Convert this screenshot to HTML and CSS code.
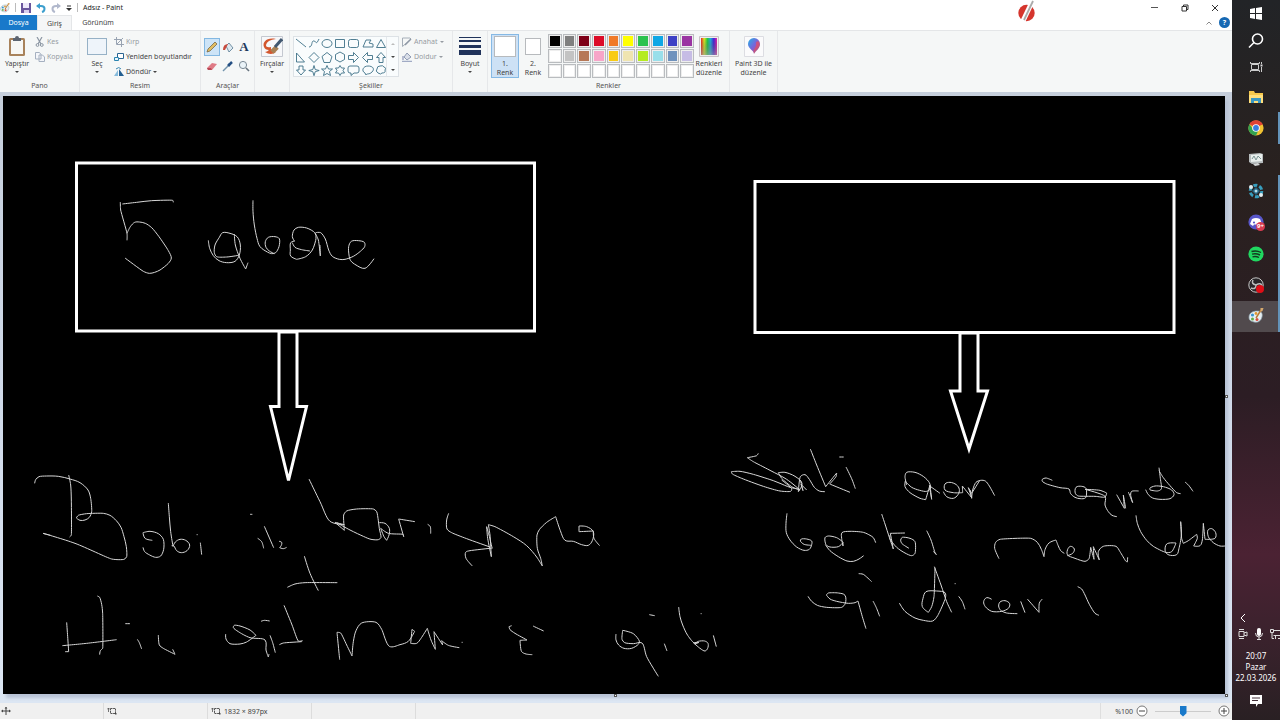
FILE: index.html
```html
<!DOCTYPE html>
<html lang="tr">
<head>
<meta charset="utf-8">
<title>Adsız - Paint</title>
<link rel="stylesheet" href="styles.css">
</head>
<body>
<svg class="defs" aria-hidden="true">
  <defs>
    <linearGradient id="rain"><stop offset="0" stop-color="#e22"/><stop offset=".2" stop-color="#de2"/><stop offset=".4" stop-color="#2c4"/><stop offset=".6" stop-color="#2ad"/><stop offset=".8" stop-color="#42d"/><stop offset="1" stop-color="#e2a"/></linearGradient>
    <linearGradient id="dark" x2="0" y2="1"><stop offset="0" stop-color="#333" stop-opacity="0"/><stop offset="1" stop-color="#999" stop-opacity=".6"/></linearGradient>
    <linearGradient id="drop" x2="1" y2="1"><stop offset="0" stop-color="#20b4e8"/><stop offset=".5" stop-color="#7b62d8"/><stop offset="1" stop-color="#e8503a"/></linearGradient>
    <symbol id="palette" viewBox="0 0 16 16"><path d="M1 9C1 5 5 3 9 3s6 2 5 6-4 6-8 5-5-2-5-5z" fill="#e5eef2" stroke="#8ca2ac" stroke-width=".7"/><circle cx="4.500" cy="7" r="1.600" fill="#3996d2"/><circle cx="8" cy="5.500" r="1.400" fill="#e29a32"/><circle cx="4.500" cy="11" r="1.500" fill="#63ad45"/><circle cx="9" cy="11.500" r="1.500" fill="#d84b3c"/><path d="M8 10l5-8" stroke="#b87c35" stroke-width="1.500"/><path d="M12.500 4V0h3l-1 3z" fill="#d6a96e"/></symbol>
    <symbol id="size" viewBox="0 0 10 8"><path d="M1.500 5V1M0 2.500L1.500 1 3 2.500" fill="none" stroke="#555" stroke-width=".8"/><path d="M3.500 1.500h5v5h-5z" fill="none" stroke="#555" stroke-dasharray="2 .6"/><path d="M8 6h1.500v1.500H8z" fill="#444"/></symbol>
  </defs>
</svg>
<main class="app">
  <header class="titlebar">
    <svg class="i12" viewBox="0 0 16 16"><use href="#palette"/></svg>
    <span class="rule"></span>
    <button class="plain" aria-label="Kaydet"><svg class="i10" viewBox="0 0 10 10"><path d="M0 0h10v10H0z" fill="#69569d"/><path d="M2 0h6v5H2z" fill="#eee9fa"/><path d="M3 7h5v3H3z" fill="#d7cfee"/></svg></button>
    <button class="plain" aria-label="Geri al"><svg class="i10" viewBox="0 0 10 10"><path d="M1 3h4c5 0 4 5 1 6" fill="none" stroke="#3d9fce" stroke-width="2"/><path d="M0 3l4-3v6z" fill="#3d9fce"/></svg></button>
    <button class="plain" aria-label="Yinele"><svg class="i10" viewBox="0 0 10 10"><path d="M9 3H5C0 3 1 8 4 9" fill="none" stroke="#b1b8cc" stroke-width="2"/><path d="M10 3L6 0v6z" fill="#b1b8cc"/></svg></button>
    <button class="plain" aria-label="Özelleştir"><svg class="i6" viewBox="0 0 6 6"><path d="M1 1h4" stroke="#333"/><path d="M0 3h6L3 6z" fill="#333"/></svg></button>
    <span class="rule"></span>
    <h1>Adsız - Paint</h1>
    <div class="winbtns">
      <button class="plain" aria-label="Simge durumuna küçült"><svg class="i8" viewBox="0 0 8 8"><path d="M0 3.500h7" stroke="#555"/></svg></button>
      <button class="plain" aria-label="Önceki boyut"><svg class="i8" viewBox="0 0 8 8"><path d="M1 2.500h4.500V7H1zM2.500 2.500V1H7v4.500H5.500" fill="none" stroke="#333"/></svg></button>
      <button class="plain" aria-label="Kapat"><svg class="i8" viewBox="0 0 8 8"><path d="M1 1l6 6M7 1L1 7" stroke="#333"/></svg></button>
    </div>
    <svg class="mark" viewBox="0 0 17 23"><circle cx="8.500" cy="13" r="8.200" fill="#d5352d"/><path d="M15 0L4 23" stroke="#fff" stroke-width="5"/><path d="M15 1L6 20" stroke="#aaa" stroke-width="1.800"/></svg>
  </header>
  <nav class="tabs">
    <button class="tab file">Dosya</button><button class="tab on">Giriş</button><button class="tab">Görünüm</button>
    <button class="plain fold" aria-label="Şeridi daralt"><svg class="i6" viewBox="0 0 6 6"><path d="M.5 4.500L3 2l2.500 2.500" fill="none" stroke="#888"/></svg></button>
    <button class="plain help" aria-label="Yardım">?</button>
  </nav>
  <section class="ribbon">
    <div class="group pano">
      <div class="tools">
        <button class="big paste"><svg viewBox="0 0 18 21"><rect x="1" y="2" width="16" height="18" rx="1.500" fill="#a8825b"/><path d="M3 4h12v14H3z" fill="#f7f7f5"/><path d="M5 2h2a2 2 0 014 0h2v3H5z" fill="#5c6470"/></svg><span>Yapıştır</span><i class="caret"></i></button>
        <div class="stack">
          <button class="row off"><svg viewBox="0 0 10 10"><path d="M2 0l4 7M7 0L3 7" stroke="#8b95a2" stroke-width="1.200"/><circle cx="2.500" cy="8" r="1.400" fill="none" stroke="#8b95a2"/><circle cx="6.800" cy="8" r="1.400" fill="none" stroke="#8b95a2"/></svg>Kes</button>
          <button class="row off"><svg viewBox="0 0 10 10"><path d="M.5.500h4l1.500 2V7H.5zM4 3h3.500l2 2v4.500H4z" fill="#f4f6fa" stroke="#a5b0c0"/></svg>Kopyala</button>
        </div>
      </div>
      <h2>Pano</h2>
    </div>
    <div class="group resim">
      <div class="tools">
        <button class="big select"><svg viewBox="0 0 22 21"><rect x="1.500" y="2.500" width="19" height="16" fill="#eef4fa" stroke="#3b6d94" stroke-dasharray="1 1"/></svg><span>Seç</span><i class="caret"></i></button>
        <div class="stack">
          <button class="row off"><svg viewBox="0 0 10 10"><path d="M2.500 0v7.500H10M0 2.500h7.500V10M3 7l6-6" fill="none" stroke="#98a3b2"/></svg>Kırp</button>
          <button class="row"><svg viewBox="0 0 10 10"><path d="M3.500 1.500h6v5h-6z" fill="#fff" stroke="#2a6592"/><path d="M.5 5.500h4v3h-4z" fill="#eaf6fc" stroke="#2a84b0"/></svg>Yeniden boyutlandır</button>
          <button class="row"><svg viewBox="0 0 10 10"><path d="M0 9l4-6v6z" fill="#86bbdc"/><path d="M5 9V2l5 7z" fill="#235f91"/><path d="M2 2q3-3 5 0" fill="none" stroke="#3685b0"/></svg>Döndür<i class="caret"></i></button>
        </div>
      </div>
      <h2>Resim</h2>
    </div>
    <div class="group araclar">
      <div class="tools toolgrid">
        <button class="plain cell on" aria-label="Kalem"><svg viewBox="0 0 12 12"><path d="M1 11l1-3L9 1l2 2-7 7z" fill="#e2bd62" stroke="#776847" stroke-width=".8"/></svg></button>
        <button class="plain cell" aria-label="Renk doldur"><svg viewBox="0 0 12 12"><path d="M4 5l3-3 4 5-4 4z" fill="#dbe8f0" stroke="#567991" stroke-width=".8"/><path d="M1 9q0-6 5-6L3 9z" fill="#c84b3e"/></svg></button>
        <button class="plain cell letter" aria-label="Metin">A</button>
        <button class="plain cell" aria-label="Silgi"><svg viewBox="0 0 12 12"><path d="M1 8l5-5 5 1-5 6H2z" fill="#df7b86"/><path d="M1 8l4 0 1 2H2z" fill="#b94855"/></svg></button>
        <button class="plain cell" aria-label="Renk seçici"><svg viewBox="0 0 12 12"><path d="M1 11l6-6" stroke="#7293ac" stroke-width="1.500"/><path d="M6 4l2 2M7 5l3-3" stroke="#244f83" stroke-width="2.500"/></svg></button>
        <button class="plain cell" aria-label="Büyüteç"><svg viewBox="0 0 12 12"><circle cx="5" cy="5" r="3.600" fill="#eaf3f8" stroke="#798894"/><path d="M8 8l3 3" stroke="#66737e" stroke-width="1.600"/></svg></button>
      </div>
      <h2>Araçlar</h2>
    </div>
    <div class="group fircalar">
      <button class="big"><svg viewBox="0 0 22 21"><path d="M.5.500h21v20H.5z" fill="#f7f8fa" stroke="#c4c8d0"/><path d="M15 3C6 1 1 6 3 11q1 3 5 3-2 2-4 2 6 4 11 0-6-1-5-5-5 1-5-2 1-5 10-6z" fill="#d3572f"/><path d="M11 16l5-5" stroke="#a88155" stroke-width="5"/><path d="M14 11l7-8" stroke="#415870" stroke-width="3"/></svg><span>Fırçalar</span><i class="caret"></i></button>
    </div>
    <div class="group sekiller">
      <div class="tools">
        <div class="gallery">
          <svg class="shapes" viewBox="0 0 92 40" fill="none" stroke="#3d7187" stroke-width=".9">
            <path d="M2 2l10 8M15 10c4 0 2-7 5-6s2 4 5-2M41.500 2.500h9v8h-9zM69 10l3-7h5l-2 3 4 1v3zM87 2.500l4.500 8h-9z"/>
            <ellipse cx="33" cy="6.500" rx="5" ry="4"/><rect x="54.500" y="2.500" width="10" height="8" rx="2"/>
            <path d="M2.500 16v9h8zM20 15.500l5 5-5 5-5-5zM33 15.500l5 4-2 6h-6l-2-6zM46 15l4.500 2.500v5L46 25l-4.500-2.500v-5zM54.500 18.500h5v-3l5 5-5 5v-3h-5zM78.500 18.500h-5v-3l-5 5 5 5v-3h5zM87 15.500l4.500 5h-2.500v5h-4v-5h-2.500z"/>
            <path d="M5 29h4v4h2.500L7 38l-4.500-5H5zM20 28.500l1.200 4 4 1-4 1.200-1.200 4-1.200-4-4-1.200 4-1zM33 28.500l1.500 3.500h4l-3 2.500 1 4-3.500-2-3.500 2 1-4-3-2.500h4zM46 28.500l1.500 2.500h3L49 33.500l1.500 2.500h-3L46 38.500 44.500 36h-3l1.500-2.500-1.500-2.500h3zM56 29h7q2 0 2 2v3q0 2-2 2h-3l-3 2.500V36h-1q-2 0-2-2v-3q0-2 2-2z"/>
            <path d="M71 36c-4-2-2-7 3-7s7 3 4 6-5 1-6 3zM84 36q-3-2-1-4 0-3 3-3 3-1 4 1 3 1 1 3 1 3-3 3-1 2-4 0z"/>
          </svg>
          <span class="scroll"><i class="caret up"></i><i class="caret"></i><i class="caret more"></i></span>
        </div>
        <div class="stack">
          <button class="row off"><svg viewBox="0 0 10 10"><path d="M8 1H.5v8.500L9 2z" fill="none" stroke="#a5aeb8"/><path d="M3 8l6-6" stroke="#8e98a5" stroke-width="1.500"/></svg>Anahat<i class="caret"></i></button>
          <button class="row off"><svg viewBox="0 0 10 10"><path d="M2 5l3-4 4 4-4 3z" fill="#d9dee8" stroke="#8f9bb4"/><path d="M0 9.500h10M1 4v4" stroke="#a1abc5" stroke-width="1.500"/></svg>Doldur<i class="caret"></i></button>
        </div>
      </div>
      <h2>Şekiller</h2>
    </div>
    <div class="group boyut">
      <button class="big"><svg viewBox="0 0 22 21"><path d="M0 1.500h22" stroke="#20335b"/><path d="M0 5h22" stroke="#20335b" stroke-width="2"/><path d="M0 10.500h22" stroke="#20335b" stroke-width="3"/><path d="M0 16.500h22" stroke="#20335b" stroke-width="5"/></svg><span>Boyut</span><i class="caret"></i></button>
    </div>
    <div class="group renkler">
      <div class="tools">
        <button class="color on"><b></b><span>1.<br>Renk</span></button>
        <button class="color"><b></b><span>2.<br>Renk</span></button>
        <div class="swatches">
          <button class="k1" aria-label="Siyah"></button><button class="k2" aria-label="Gri"></button><button class="k3" aria-label="Koyu kırmızı"></button><button class="k4" aria-label="Kırmızı"></button><button class="k5" aria-label="Turuncu"></button><button class="k6" aria-label="Sarı"></button><button class="k7" aria-label="Yeşil"></button><button class="k8" aria-label="Turkuaz"></button><button class="k9" aria-label="Çivit mavisi"></button><button class="k10" aria-label="Mor"></button>
          <button class="k11" aria-label="Beyaz"></button><button class="k12" aria-label="Açık gri"></button><button class="k13" aria-label="Kahverengi"></button><button class="k14" aria-label="Gül"></button><button class="k15" aria-label="Altın"></button><button class="k16" aria-label="Açık sarı"></button><button class="k17" aria-label="Limon"></button><button class="k18" aria-label="Açık turkuaz"></button><button class="k19" aria-label="Mavi gri"></button><button class="k20" aria-label="Lavanta"></button>
          <button aria-label="Özel 1"></button><button aria-label="Özel 2"></button><button aria-label="Özel 3"></button><button aria-label="Özel 4"></button><button aria-label="Özel 5"></button><button aria-label="Özel 6"></button><button aria-label="Özel 7"></button><button aria-label="Özel 8"></button><button aria-label="Özel 9"></button><button aria-label="Özel 10"></button>
        </div>
        <button class="big edit"><svg viewBox="0 0 20 21"><path d="M.5.500h19v20H.5z" fill="#eee" stroke="#c9c2c6"/><path d="M2 2h16v17H2z" fill="url(#rain)"/><path d="M2 2h16v17H2z" fill="url(#dark)"/></svg><span>Renkleri<br>düzenle</span></button>
      </div>
      <h2>Renkler</h2>
    </div>
    <div class="group paint3d">
      <button class="big"><svg viewBox="0 0 20 21"><path d="M.5.500h19v20H.5z" fill="#fbfbfc" stroke="#dcdde2"/><path d="M10 18c0-4-6-5-6-10a6 6 0 0112 0c0 5-4 6-6 10z" fill="url(#drop)"/><path d="M10 17c-1-4 3-6 2-9-1-2 2-4 3-2 2 5-3 6-5 11z" fill="#e44f65" opacity=".7"/></svg><span>Paint 3D ile<br>düzenle</span></button>
    </div>
  </section>
  <section class="work">
    <div class="sheet">
      <svg class="canvas" viewBox="3 96 1222 598" role="img" aria-label="Çizim tuvali">
        <g class="outline">
          <path d="M76.500 163h458v168h-458z"/>
          <path d="M755 181.500h419v151H755z"/>
          <path d="M279 332v74.500h-8.500l18 74 18-74H297V332z"/>
          <path d="M960 333v58h-9.500l18.500 58 18.500-58H978v-58z"/>
        </g>
        <g class="ink" id="ink"></g>
      </svg>
      <i class="handle e"></i><i class="handle s"></i><i class="handle se"></i>
    </div>
  </section>
  <footer class="status">
    <span class="slot"><svg viewBox="0 0 10 8"><path d="M5 0v8M1 4h8" stroke="#444"/><path d="M0 4l2-1.500v3zM10 4L8 2.500v3zM5 0l1.500 1.500h-3z" fill="#444"/></svg></span>
    <span class="slot"><svg viewBox="0 0 10 8"><use href="#size"/></svg></span>
    <span class="slot"><svg viewBox="0 0 10 8"><use href="#size"/></svg>1832 × 897px</span>
    <span class="slot"></span>
    <span class="zoom"><label for="zoom">%100</label>
      <button class="plain" aria-label="Uzaklaştır"><svg viewBox="0 0 12 12"><circle cx="6" cy="6" r="5" fill="#fff" stroke="#777"/><path d="M3 6h6" stroke="#444"/></svg></button>
      <input id="zoom" type="range" min="0" max="100" value="50">
      <button class="plain" aria-label="Yakınlaştır"><svg viewBox="0 0 12 12"><circle cx="6" cy="6" r="5" fill="#fff" stroke="#777"/><path d="M3 6h6M6 3v6" stroke="#444"/></svg></button>
    </span>
  </footer>
</main>
<aside class="taskbar">
  <div class="system">
    <button class="plain" aria-label="Başlat"><svg viewBox="0 0 16 16"><path d="M2 3l5-1v5H2zM8 2l6-1v6H8zM2 8h5v5l-5-1zM8 8h6v6l-6-1z" fill="#fff"/></svg></button>
    <button class="plain" aria-label="Ara"><svg viewBox="0 0 16 16"><circle cx="9.500" cy="6" r="5" fill="none" stroke="#fff" stroke-width="1.600"/><path d="M6 9.500l-5 5" stroke="#fff" stroke-width="1.600"/></svg></button>
    <button class="plain" aria-label="Görev görünümü"><svg viewBox="0 0 16 16"><path d="M3.500 4.500h7v5h-7zM2.500 2v1.500h9V2M2.500 12v-1.500h9V12M13.500 2v2M13.500 7v5" fill="none" stroke="#ccc"/><path d="M12.500 4.500h2v2h-2z" fill="#ddd"/></svg></button>
  </div>
  <div class="pins">
    <button class="plain" aria-label="Dosya Gezgini"><svg viewBox="0 0 16 16"><path d="M1 2h5l1 2h8v10H1z" fill="#f5c84c"/><path d="M1 6h14v8H1z" fill="#ffdf7c"/><path d="M3 9h10v5h-3v-2H6v2H3z" fill="#3a98c3"/></svg></button>
    <button class="plain run" aria-label="Chrome"><svg viewBox="0 0 16 16"><circle cx="8" cy="8" r="7.600" fill="#f1c232"/><path d="M8 8L1.400 4.200A7.600 7.600 0 0114.600 4.200z" fill="#df4335"/><path d="M1.400 4.200A7.600 7.600 0 008 15.600L11 9H5z" fill="#32a250"/><path d="M8 4.400h6.700l-.5-1H8z" fill="#df4335"/><circle cx="8" cy="8" r="3.800" fill="#fff"/><circle cx="8" cy="8" r="2.900" fill="#397de1"/></svg></button>
    <button class="plain" aria-label="Monitör"><svg viewBox="0 0 16 16"><path d="M1 3l11-1 3 1v9L4 13l-3-2z" fill="#b7bdbe"/><path d="M3 4l11-1v7L3 11z" fill="#e9efed"/><path d="M4 8l2-3 2 4 2-4 3 3" fill="none" stroke="#7b9594"/><path d="M5 13l5-1 2 2-5 1z" fill="#d5d8d8"/></svg></button>
    <button class="plain run" aria-label="Uygulama"><svg viewBox="0 0 16 16"><circle cx="8" cy="8" r="5.800" fill="none" stroke="#379dbd" stroke-width="3" stroke-dasharray="4 2"/><path d="M8 4l4 4-4 4-4-4z" fill="#246684"/><circle cx="8" cy="8" r="1.500" fill="#b8e0ec"/><circle cx="3" cy="4" r="2" fill="#e2edf0"/><circle cx="13" cy="12" r="2" fill="#e2edf0"/></svg></button>
    <button class="plain run" aria-label="Discord"><svg viewBox="0 0 16 16"><circle cx="8" cy="8" r="7.600" fill="#5856c9"/><path d="M4 5q4-2 8 0l2 5-3 2-1-1.500H6L5 12l-3-2z" fill="#fff"/><circle cx="6" cy="8.500" r="1.100" fill="#5856c9"/></svg><em>9+</em></button>
    <button class="plain run" aria-label="Spotify"><svg viewBox="0 0 16 16"><circle cx="8" cy="8" r="7.600" fill="#20d760"/><path d="M3.500 5.500q5-1.500 9.500 1M4 8.200q4-1.200 8 .8M4.500 10.800q3.500-1 6.500.7" fill="none" stroke="#14391f" stroke-width="1.400"/></svg></button>
    <button class="plain run" aria-label="OBS"><svg viewBox="0 0 16 16"><circle cx="8" cy="8" r="7.200" fill="#29272a" stroke="#c6c6c6"/><path d="M8 8q-5-1-3-5M8 8q5-3 6 1M8 8q0 5-5 3" fill="none" stroke="#bcbcbc" stroke-width="1.500"/><circle cx="12" cy="12" r="4" fill="#e00d16"/></svg></button>
    <button class="plain run active" aria-label="Paint"><svg viewBox="0 0 16 16"><use href="#palette"/></svg></button>
  </div>
  <div class="tray">
    <button class="plain arrow" aria-label="Gizli simgeler"><svg viewBox="0 0 8 8"><path d="M6 0L2 4l4 4" fill="none" stroke="#fff"/></svg></button>
    <div class="trayicons">
      <svg viewBox="0 0 10 12"><path d="M1 3.500h5v5H1zM6 5l3-1v4L6 7M1 1.500h5M1 10.500h5" fill="none" stroke="#ddd"/></svg>
      <svg viewBox="0 0 10 12"><rect x="3" y="0" width="4" height="8" rx="2" fill="#fff"/><path d="M1.500 5q0 4 3.500 4t3.500-4M5 9v3M3 11.500h4" fill="none" stroke="#ddd"/></svg>
      <svg viewBox="0 0 10 12"><path d="M.5 1.500h3v3h-3zM3.500 2.500H10M2 4.500v6h2M3.500 7.500H10M5.500 7v4M8 10.500h2" fill="none" stroke="#ddd"/></svg>
    </div>
    <time datetime="2026-03-22T20:07">20:07<br>Pazar<br>22.03.2026</time>
    <button class="plain note" aria-label="Bildirimler"><svg viewBox="0 0 12 12"><path d="M0 0h12v9H8l-2 3V9H0z" fill="#fff"/><path d="M2 3h8M2 5.500h6" stroke="#46313a"/></svg></button>
  </div>
</aside>
<script src="ink.js"></script>
</body>
</html>
```
FILE: ink.js
```js
// Pencil strokes: each sheet region has an origin and strokes given as x,y points in thirds of a pixel.
const SCALE = 3;
const regions = [
  { origin: [60, 150], strokes: [
    "187,162 230,157 275,152 338,151 340,157",
    "181,156 182,180 201,250 201,271",
    "201,250 211,230 224,217 238,216 256,220 275,233 297,260 325,302 334,324 325,340 300,360 284,367 268,370 250,364 195,324",
    "445,271 449,295 460,317 477,332 500,338 525,334 538,315 541,285 532,261 510,250 488,248 478,262 465,285 463,308 470,320 500,321 536,316",
    "523,252 526,285 540,325 557,357 564,338",
    "579,151 579,185 583,225 591,265 600,290 622,306 635,311 647,308 657,290 658,266 645,260 625,262 616,275 618,292 628,303 643,311",
    "710,328 692,318 691,300 692,278 705,273",
    "703,273 697,260 702,240 715,232 740,234 764,248 768,265 757,300 737,320 710,328",
    "697,278 705,292 725,299 750,303",
    "765,248 775,270 781,318 780,285",
    "767,248 782,248 796,267 806,300 817,319 838,328 855,328 880,319 901,304 914,290 913,277 895,272 874,274 866,290 867,315 872,332 888,345 915,355 942,326"
  ] },
  { origin: [20, 460], strokes: [
    "44,70 47,59 57,50 80,48 115,49 150,57 180,68 204,90 212,115 215,155 208,172 195,180 180,181 169,174 175,166 200,161 250,160 270,166 289,182 303,202 312,230 319,260 320,290 312,298 275,297 165,250 69,220 92,226",
    "146,45 152,75 154,120 154,225 149,231",
    "397,241 375,235 369,218 390,214 415,221 430,238 431,268 422,288 407,292 389,285 374,275 369,262",
    "445,129 448,170 452,215 459,259 466,246 480,238 497,241 509,255 501,272 484,278 470,272 462,258 455,257",
    "541,248 545,284", "530,224 533,224", "713,235 725,245 731,265", "733,199 761,263",
    "777,244 785,247 784,256 779,263 790,266 800,262", "690,163 697,163",
    "853,288 870,340 895,392", "802,382 825,372 855,368 952,368",
    "140,487 143,530 146,575 135,575", "127,557 200,550 290,539",
    "232,408 239,412 245,433 248,460 248,565 241,572 239,584", "316,491 330,491",
    "352,538 358,548 365,567", "415,525 418,555 430,565 465,583 458,568",
    "617,522 618,537 630,551 660,552 680,546 708,526 690,510 660,498 643,496 640,503 655,515 690,533 735,540 738,570 745,591 747,582",
    "750,526 758,548 766,578", "723,484 733,481 749,483", "792,436 815,492 835,543 848,542", "845,545 790,549 778,554"
  ] },
  { origin: [300, 460], strokes: [
    "27,57 60,125 90,184 133,194 105,187 133,211 131,165 140,153 170,147 220,147 230,155 235,182 238,206 243,232 235,239 213,238 190,229 150,210 110,188",
    "238,188 255,190 268,205 267,225 260,241 252,230 242,205 265,220 309,223 311,230 296,177 345,185",
    "383,193 391,200 392,221",
    "446,160 440,180 441,207 455,218 500,236 570,261", "578,264 510,272 497,277 498,295 517,318",
    "576,263 567,225 560,200 563,235 574,290 570,225 565,194 585,200 640,230 680,257 710,291 727,318 722,295 712,265 711,225 718,209 740,187 767,170 781,212 795,241 820,244 845,254 865,256 877,242 880,215 860,200 837,198 837,215 880,213 882,235 899,257",
    "119,599 111,517 122,519 140,555 156,588 160,545 168,512 185,489 228,487 245,508 268,559 300,554 325,544 344,514 336,508 332,550 350,550 363,535 382,505 393,540 406,568 402,515 428,555 425,542 445,556 478,563",
    "485,547 488,547", "635,497 627,500 630,509 645,520 681,540 660,541 661,555 665,575 678,582 697,584",
    "699,498 731,513", "1048,464 1064,467", "948,522 948,540 956,555 972,565 995,565 1015,553 1018,543 1000,521 968,511 966,538 974,548 1000,551 1026,549 1040,590 1075,649",
    "1093,551 1101,573", "1136,441 1140,470 1148,495 1163,526 1185,551 1197,547 1180,548 1200,565 1215,573 1223,565 1224,550 1214,543 1195,544 1184,551",
    "1240,526 1249,560", "1202,461 1205,461"
  ] },
  { origin: [720, 440], strokes: [
    "115,40 110,47 82,53 100,65 150,91 200,118 240,150 215,140 185,115 175,98 195,97 225,109 246,130 235,155 241,110 255,104 268,118 283,142 298,153 315,155",
    "241,120 249,152 243,133 260,150", "240,148 210,142 180,130 160,122 100,103 60,94 34,95 37,102 65,115 130,139 180,153 212,154 215,146 185,120",
    "271,27 290,75 317,140 350,99 348,110 329,132 390,157", "358,51 371,51", "378,81 395,116 406,146",
    "560,135 555,110 560,97 585,97 611,110 628,128 631,145 620,154 599,151 575,142 560,128 556,123 555,140 570,158 600,175 617,179 630,135 635,178 628,137 660,160",
    "670,155 680,170 700,175 714,164 718,148 709,134 690,127 675,132 675,150 700,158 728,158 727,138 755,173 745,143 755,160 780,120",
    "201,220 198,250 199,278 210,300 230,321 252,331 268,328 275,314 275,303 260,297 244,297 241,303 252,313 274,316",
    "370,307 350,293 325,288 315,293 318,314 330,321 355,320 369,308 369,318 365,295 366,278 390,274 430,277 450,286 460,293 467,308",
    "316,314 330,332 355,350 381,363 400,364 417,357 431,347",
    "485,222 495,252 508,292 520,327 511,280 555,279", "510,285 510,297 530,322 555,339 575,347 585,340 585,305 570,295 547,292 542,300 546,311 567,325",
    "620,272 633,300 644,335 649,344 640,334",
    "416,401 430,403 455,425", "264,469 275,484 292,496 320,502 365,502 376,490 375,466 355,459 325,459 319,465 330,477 350,484 385,490 405,488 414,483 427,530 438,566",
    "459,483 469,503 479,529", "538,489 555,514 585,534 610,541 638,543 653,527 676,475 675,458 650,453 618,455 609,475 607,500 625,517 635,500 642,470 645,383",
    "643,380 663,435 680,485 695,517", "716,469 727,485 735,508", "704,431 707,431"
  ] },
  { origin: [970, 440], strokes: [
    "0,150 5,175 8,150 18,127 32,121 46,123 58,138 74,167",
    "247,121 228,114 217,118 217,124 230,132 270,143 297,147 302,161 315,172 330,176 347,173 348,145 335,139 318,142 316,160 325,168 375,169 405,171 410,159 390,151 345,148 405,169 405,195 415,215 426,226 441,230",
    "440,164 463,205 460,165 467,205", "475,156 488,188 482,165 485,154 506,153",
    "527,149 535,164 548,174 570,178 600,176 612,164 605,150 580,140 555,138 540,144 540,150 562,153 574,147 571,115 567,83", "567,92 580,113 600,137 620,158 632,161",
    "645,126 656,136 669,154",
    "87,356 74,325 77,307 90,298 182,295 202,307 214,328 222,350 225,329 237,309 258,300 265,318 272,332 283,340",
    "292,347 308,340 313,327 302,319 294,326 292,344 315,355 345,364 357,356 362,322 372,358 370,320 388,360 385,335 400,319 438,319 450,335 467,363 472,366 473,352",
    "498,226 502,250 512,275 530,301 550,319 587,337 605,335 618,309 590,312 586,335 597,345 620,344 627,325 634,285 632,245 635,295 640,310 655,302 680,283 682,295 671,318 690,317 697,300 700,250 705,298 735,295 737,278 725,266 714,270 715,290 730,308 750,318 765,318",
    "65,478 50,473 41,485 46,500 65,514 95,514 115,505 119,491 105,482 90,486 86,498 92,511 110,519 142,521",
    "152,484 165,518", "172,477 207,517 208,489 217,477", "323,440 335,447 345,465 358,493 375,520 387,526"
  ] }
];

function pathFor(text, [ox, oy]) {
  const pts = text.split(" ").map(p => p.split(",").map(Number)).map(([x, y]) => [ox + x / SCALE, oy + y / SCALE]);
  const tangent = i => {
    const a = pts[i - 1], b = pts[i], c = pts[i + 1];
    if (!a || !c) return [0, 0];
    const u = [b[0] - a[0], b[1] - a[1]], v = [c[0] - b[0], c[1] - b[1]];
    const lu = Math.hypot(...u), lv = Math.hypot(...v);
    const cos = (u[0] * v[0] + u[1] * v[1]) / (lu * lv);
    if (cos < 0.2) return [0, 0];
    const k = Math.min(lu, lv) / 3;
    const t = [u[0] / lu + v[0] / lv, u[1] / lu + v[1] / lv], lt = Math.hypot(...t);
    return [t[0] / lt * k, t[1] / lt * k];
  };
  const f = n => n.toFixed(2);
  let d = `M${f(pts[0][0])} ${f(pts[0][1])}`;
  for (let i = 1; i < pts.length; i++) {
    const s = tangent(i - 1), e = tangent(i), p = pts[i - 1], q = pts[i];
    d += `C${f(p[0] + s[0])} ${f(p[1] + s[1])} ${f(q[0] - e[0])} ${f(q[1] - e[1])} ${f(q[0])} ${f(q[1])}`;
  }
  return d;
}

const ink = document.getElementById("ink");
for (const { origin, strokes } of regions) {
  for (const stroke of strokes) {
    const path = document.createElementNS("http://www.w3.org/2000/svg", "path");
    path.setAttribute("d", pathFor(stroke, origin));
    ink.appendChild(path);
  }
}
```
FILE: styles.css
```css
* { box-sizing: border-box; }
body { margin: 0; display: flex; min-height: 100vh; font: 7px/9px "Noto Sans", "Open Sans", sans-serif; color: #444; background: #fff; overflow: hidden; }
button { font: inherit; color: inherit; border: 0; padding: 0; background: none; }
svg { display: block; flex: none; }
h1, h2 { margin: 0; font: inherit; }
.defs { position: absolute; width: 0; height: 0; }
.plain { display: grid; place-items: center; }
.app { flex: 1; min-width: 0; display: flex; flex-direction: column; padding-bottom: 1px; }

.titlebar { position: relative; height: 15px; display: flex; align-items: center; gap: 5px; }
.titlebar h1 { color: #222; }
.i12 { width: 10px; height: 12px; }
.i10 { width: 10px; height: 10px; }
.i8 { width: 8px; height: 8px; }
.i6 { width: 6px; height: 6px; }
.rule { width: 1px; height: 9px; background: #bbb; }
.winbtns { margin-left: auto; display: flex; gap: 22px; padding-right: 13px; }
.mark { position: absolute; right: 197px; top: 0; width: 17px; height: 23px; }

.tabs { height: 16px; display: flex; align-items: stretch; border-bottom: 1px solid #e4e6e8; }
.tab { width: 52px; color: #444; }
.tab.file { width: 37px; background: #1979ca; color: #fff; }
.tab.on { width: 35px; background: #f5f6f7; border: 1px solid #e4e6e8; border-bottom: 0; }
.fold { margin-left: auto; width: 18px; }
.help { align-self: center; margin: 0 2px 0 1px; width: 11px; height: 11px; border-radius: 50%; background: #1668b3; color: #fff; font-weight: bold; }

.ribbon { height: 61px; display: flex; background: #f5f7f7; }
.group { display: flex; flex-direction: column; padding: 3px 3px 1px; border-right: 1px solid #e6e8ea; }
.group h2 { margin-top: auto; text-align: center; color: #555; line-height: 11px; }
.tools { display: flex; }
.pano { width: 80px; }
.resim { width: 121px; }
.araclar { width: 54px; }
.fircalar { width: 35px; }
.sekiller { width: 163px; }
.boyut { width: 35px; }
.renkler { width: 242px; }
.paint3d { width: 48px; }
.big { display: flex; flex-direction: column; align-items: center; width: 28px; padding-top: 2px; white-space: nowrap; }
.big svg { height: 21px; margin-bottom: 2px; }
.big span { line-height: 9px; }
.big .caret { margin-top: 3px; }
.group > .big { align-self: center; }
.caret { width: 0; height: 0; border: 2px solid transparent; border-top-color: currentColor; border-bottom: 0; }
.stack { display: flex; flex-direction: column; }
.row { display: flex; align-items: center; height: 15px; gap: 2px; white-space: nowrap; }
.row svg { width: 10px; height: 10px; }
.off { color: #969ba2; }
.pano .stack { margin-left: 4px; }
.resim .stack { margin-left: 3px; }
.toolgrid { display: grid; grid-template-columns: repeat(3, 16px); grid-template-rows: 18px 18px; row-gap: 1px; margin-top: 4px; }
.cell svg { width: 12px; height: 12px; }
.cell.on { background: #cde4f7; border: 1px solid #83b8e2; }
.letter { font: bold 13px "Liberation Serif", serif; color: #20385c; }
.gallery { display: flex; width: 106px; height: 41px; margin-top: 2px; border: 1px solid #dde2e6; background: #f9fcfd; }
.shapes { width: 92px; height: 40px; }
.scroll { flex: 1; display: flex; flex-direction: column; justify-content: space-around; align-items: center; border-left: 1px solid #e4e8eb; }
.caret.up { border-top: 0; border-bottom: 2px solid #bbb; }
.sekiller .stack { margin-left: 3px; }
.color { display: flex; flex-direction: column; align-items: center; width: 28px; height: 44px; padding-top: 2px; }
.color b { width: 16px; height: 17px; margin: 2px 0 4px; background: #fff; border: 1px solid #b7babd; }
.color.on { background: #cde1f5; border: 1px solid #86b9e5; padding-top: 1px; }
.color.on b { width: 22px; height: 21px; margin: 0 0 2px; }
.color span { line-height: 9px; }
.swatches { display: grid; grid-template-columns: repeat(10, 1fr); grid-template-rows: repeat(3, 1fr); gap: 1px; width: 146px; height: 44px; margin-left: 1px; }
.swatches button { background: #fff; border: 1px solid #b9bcbf; box-shadow: inset 0 0 0 1px #eee; }
.swatches .k1 { background: #000; } .swatches .k2 { background: #7f7f7f; } .swatches .k3 { background: #7e0018; } .swatches .k4 { background: #dc0c28; } .swatches .k5 { background: #f07a28; }
.swatches .k6 { background: #ff0; } .swatches .k7 { background: #2bc24e; } .swatches .k8 { background: #0ea7e5; } .swatches .k9 { background: #3d41c5; } .swatches .k10 { background: #9a35a2; }
.swatches .k11 { background: #fff; } .swatches .k12 { background: #c3c3c3; } .swatches .k13 { background: #b67857; } .swatches .k14 { background: #f7a5c8; } .swatches .k15 { background: #f8cb15; }
.swatches .k16 { background: #efe4b0; } .swatches .k17 { background: #b5eb20; } .swatches .k18 { background: #99dfea; } .swatches .k19 { background: #6f92bd; } .swatches .k20 { background: #c6bce5; }
.edit { margin-left: 1px; }
.paint3d .big svg, .edit svg { width: 20px; }

.work { flex: 1; padding: 4px 7px 8px 3px; background: linear-gradient(#c5cedb, #d0dae9 50%, #dce6f3); }
.sheet { position: relative; box-shadow: 3px 4px 3px #b8c3d5; }
.canvas { width: 100%; background: #000; }
.outline { fill: none; stroke: #fff; stroke-width: 3; }
.ink { fill: none; stroke: #d8d8d8; stroke-width: 1; }
.handle { position: absolute; width: 3px; height: 3px; background: #fff; border: 1px solid #555; }
.handle.e { right: -3px; top: 50%; }
.handle.s { left: 50%; bottom: -3px; }
.handle.se { right: -3px; bottom: -3px; }

.status { display: flex; height: 16px; background: #f0f0f0; }
.slot { display: flex; align-items: center; gap: 3px; width: 104px; padding-left: 3px; border-right: 1px solid #dcdcdc; }
.slot:first-child { padding-left: 1px; }
.slot svg { width: 10px; height: 8px; }
.zoom { display: flex; align-items: center; gap: 3px; margin-left: auto; padding: 0 2px 0 14px; border-left: 1px solid #dedede; }
.zoom svg { width: 12px; height: 12px; }
.zoom input { appearance: none; width: 64px; height: 12px; margin: 0; background: linear-gradient(#ccc, #ccc) center / 56px 1px no-repeat; }
.zoom input::-webkit-slider-thumb { appearance: none; width: 7px; height: 11px; background: #1979ca; clip-path: polygon(0 0, 100% 0, 100% 70%, 50% 100%, 0 70%); }

.taskbar { width: 48px; display: flex; flex-direction: column; color: #fff; background: linear-gradient(#222427, #29211f 24%, #2c1d24 55%, #4b2233 77%, #3b222d 88%, #292023); }
.taskbar svg { width: 16px; height: 16px; }
.system { display: grid; grid-template-rows: repeat(3, 27px); }
.pins { display: grid; height: 251px; grid-template-rows: repeat(8, 1fr); }
.pins button { position: relative; }
.run { box-shadow: inset -2px 0 #6393b9; }
.active { background: #514a4d; }
.pins em { position: absolute; left: 24px; top: 15px; width: 9px; height: 9px; border-radius: 50%; background: #d83c51; font: bold 6px/9px "Noto Sans", sans-serif; text-align: center; }
.tray { margin-top: auto; display: flex; flex-direction: column; align-items: center; padding-bottom: 13px; }
.arrow { align-self: flex-start; margin-left: 7px; }
.taskbar .arrow svg { width: 8px; height: 8px; }
.trayicons { display: flex; align-self: stretch; justify-content: flex-end; gap: 6px; margin-top: 6px; }
.taskbar .trayicons svg { width: 10px; height: 12px; }
.tray time { margin-top: 10px; font-size: 8px; line-height: 11px; text-align: center; }
.note { margin-top: 12px; }
.taskbar .note svg { width: 12px; height: 12px; }
```
